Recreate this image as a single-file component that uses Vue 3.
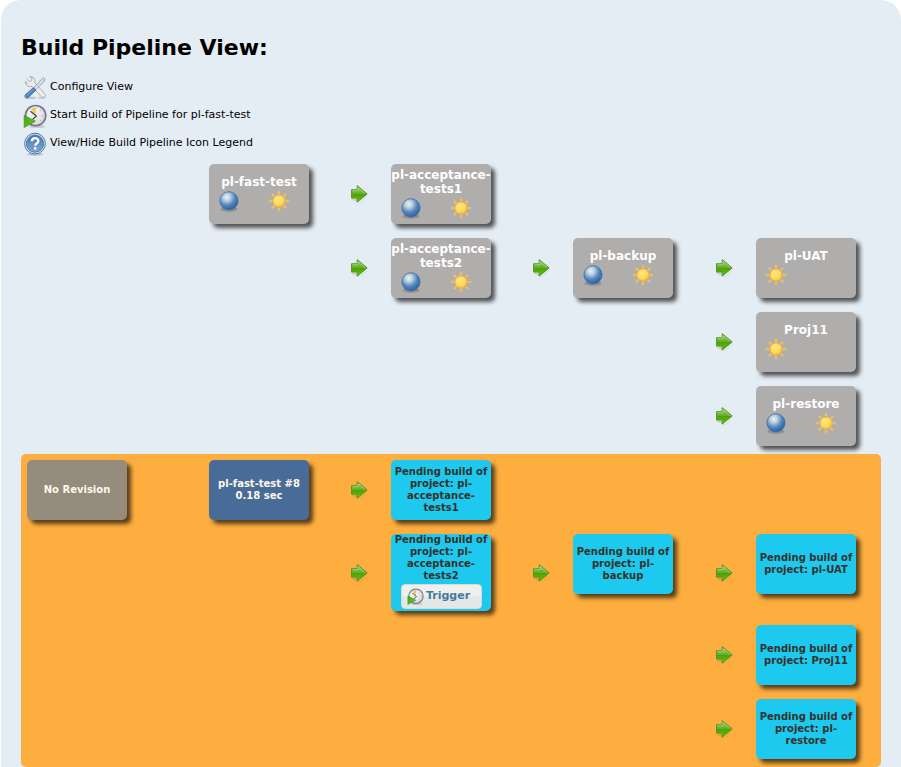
<script setup>
const projects = [
  { lines: ['pl-fast-test'], col: 2, row: 1, ball: true },
  { lines: ['pl-acceptance-', 'tests1'], col: 4, row: 1, ball: true },
  { lines: ['pl-acceptance-', 'tests2'], col: 4, row: 2, ball: true },
  { lines: ['pl-backup'], col: 6, row: 2, ball: true },
  { lines: ['pl-UAT'], col: 8, row: 2 },
  { lines: ['Proj11'], col: 8, row: 3 },
  { lines: ['pl-restore'], col: 8, row: 4, ball: true },
]
const builds = [
  { lines: ['No Revision'], col: 1, row: 1, kind: 'revision' },
  { lines: ['pl-fast-test #8', '0.18 sec'], col: 2, row: 1, kind: 'success' },
  { lines: ['Pending build of', 'project: pl-', 'acceptance-', 'tests1'], col: 4, row: 1, kind: 'pending' },
  { lines: ['Pending build of', 'project: pl-', 'acceptance-', 'tests2'], col: 4, row: 2, kind: 'pending', trigger: true },
  { lines: ['Pending build of', 'project: pl-', 'backup'], col: 6, row: 2, kind: 'pending' },
  { lines: ['Pending build of', 'project: pl-UAT'], col: 8, row: 2, kind: 'pending' },
  { lines: ['Pending build of', 'project: Proj11'], col: 8, row: 3, kind: 'pending' },
  { lines: ['Pending build of', 'project: pl-', 'restore'], col: 8, row: 4, kind: 'pending' },
]
const arrows = [
  [3, 1], [3, 2], [5, 2], [7, 2], [7, 3], [7, 4],
]
const links = [
  { icon: 'tools', text: 'Configure View' },
  { icon: 'clock', text: 'Start Build of Pipeline for pl-fast-test' },
  { icon: 'help', text: 'View/Hide Build Pipeline Icon Legend' },
]
const rays = [0, 45, 90, 135, 180, 225, 270, 315]
const cell = (c, r) => `c${c} r${r}`
</script>

<template>
  <svg class="defs" width="0" height="0">
    <defs>
      <radialGradient id="gBall" cx="38%" cy="30%" r="72%">
        <stop offset="0" stop-color="#f2f4e4" />
        <stop offset=".28" stop-color="#b9cfe0" />
        <stop offset=".62" stop-color="#5586c0" />
        <stop offset="1" stop-color="#2c5f9e" />
      </radialGradient>
      <radialGradient id="gSun" cx="42%" cy="38%" r="62%">
        <stop offset="0" stop-color="#ffe886" />
        <stop offset=".7" stop-color="#ffd84f" />
        <stop offset="1" stop-color="#f6b73c" />
      </radialGradient>
      <linearGradient id="gArrow" x1="0" y1="0" x2="0" y2="1">
        <stop offset="0" stop-color="#a5cf72" />
        <stop offset=".48" stop-color="#64ad2a" />
        <stop offset=".52" stop-color="#4ca202" />
        <stop offset="1" stop-color="#6cc410" />
      </linearGradient>
      <linearGradient id="gPlay" x1="0" y1="0" x2="1" y2="1">
        <stop offset="0" stop-color="#47a51d" />
        <stop offset="1" stop-color="#62c91c" />
      </linearGradient>
      <linearGradient id="gFace" x1="0" y1="0" x2="1" y2="1">
        <stop offset="0" stop-color="#ffffff" />
        <stop offset="1" stop-color="#d6d6d0" />
      </linearGradient>
      <linearGradient id="gHelp" x1="0" y1="0" x2="0" y2="1">
        <stop offset="0" stop-color="#4675b1" />
        <stop offset="1" stop-color="#82a7d2" />
      </linearGradient>
      <symbol id="ball" viewBox="0 0 24 24">
        <ellipse cx="12" cy="20.3" rx="8.5" ry="2.4" fill="#444" opacity=".3" />
        <circle cx="12" cy="11.8" r="9.1" fill="url(#gBall)" stroke="#3c6ca8" stroke-width=".8" />
      </symbol>
      <symbol id="sun" viewBox="0 0 24 24">
        <path v-for="a in rays" :key="a" d="M10.9 5 11.5 1.8h1L13.1 5z" :transform="`rotate(${a} 12 12)`" fill="#f4c565" stroke="#efb85d" stroke-width=".5" />
        <circle cx="12" cy="12" r="6.1" fill="url(#gSun)" stroke="#f1b344" stroke-width=".8" />
      </symbol>
      <symbol id="arrow" viewBox="0 0 20 20">
        <path d="M2 14.5 8 15v4l3-1 7-7-5 6-3 2-8-3z" fill="#555" opacity=".2" />
        <path d="M1.5 5.7h5.7V1.6L17.2 9.9 7.2 18.2v-4.1H1.5z" fill="url(#gArrow)" stroke="#4c9424" stroke-width=".9" />
        <path d="M2.6 6.7h5.5V3.8l7.4 6.1" fill="none" stroke="#c5e3a2" stroke-width=".7" opacity=".7" />
      </symbol>
      <symbol id="clock" viewBox="0 0 24 24">
        <ellipse cx="14" cy="22.4" rx="8" ry="1.4" fill="#555" opacity=".25" />
        <circle cx="12.6" cy="11.6" r="10.1" fill="url(#gFace)" stroke="#77728c" stroke-width="1.7" />
        <circle cx="12.6" cy="11.6" r="8.8" fill="none" stroke="#c7c5ce" stroke-width=".8" />
        <path d="M12.6 11.6 8 5.2a7.6 7.6 0 0 1 4.6-1.7z" fill="#efc958" />
        <path d="M7.4 7.2 13.4 12l-4 3.6" fill="none" stroke="#383838" stroke-width="1.1" />
        <path d="M12.6 3.6v1.6M20.5 11.6H19M18.2 6 17 7.1M18.2 17.2 17 16" stroke="#aaa" stroke-width=".8" />
        <path d="M1.2 11.4 12.4 17.2 1.2 23.4z" fill="url(#gPlay)" stroke="#419516" stroke-width=".8" />
      </symbol>
      <symbol id="help" viewBox="0 0 24 24">
        <ellipse cx="12" cy="22.3" rx="8" ry="1.4" fill="#555" opacity=".3" />
        <circle cx="12" cy="11.6" r="10.4" fill="#e9f0f8" stroke="#4774ad" stroke-width="1" />
        <circle cx="12" cy="11.6" r="8.7" fill="url(#gHelp)" stroke="#3f6da8" stroke-width=".8" />
        <path d="M8.9 9.3c0-4.2 6.5-4.1 6.5-.4 0 2.5-3.1 2.5-3.1 4.9" fill="none" stroke="#fff" stroke-width="2.3" />
        <rect x="11" y="15.2" width="2.5" height="2.4" fill="#fff" />
      </symbol>
      <symbol id="tools" viewBox="0 0 24 24">
        <ellipse cx="7" cy="21.8" rx="6.5" ry="1.3" fill="#555" opacity=".25" />
        <ellipse cx="19" cy="21.8" rx="4" ry="1.1" fill="#555" opacity=".2" />
        <path d="M3.3 2.6 6.4 5.6 8.7 4.7 9 2 6.8.8c3.2-.6 6.3 2.1 5 6L21.6 17.6c2.1 2.5-1 5.3-3.3 3.1L9 10.3C5.400 11.700 1.700 8.600 2.300 5.600l3 2.600" fill="#eceeed" stroke="#9c9f9e" stroke-width=".8" />
        <path d="M20.700 1.700 22.200 3.200 20.600 6.200 12.600 13.800 10.700 12 18.100 3.700z" fill="#d4dde4" stroke="#889cac" stroke-width=".8" />
        <path d="M10.300 11.700 12.800 14.100 5.300 21.400c-2 1.400-4.200-.9-2.900-2.700z" fill="#4f80bb" stroke="#31639f" stroke-width=".8" />
        <path d="M10.300 13.100 3.900 19.500" stroke="#9abbe0" stroke-width=".9" />
      </symbol>
    </defs>
  </svg>

  <main class="page">
    <h1>Build Pipeline View:</h1>
    <nav>
      <a v-for="l in links" :key="l.icon">
        <svg class="link-icon"><use :href="'#' + l.icon" /></svg>
        <span :class="l.icon + '-label'">{{ l.text }}</span>
      </a>
    </nav>

    <section class="pipeline heads">
      <div v-for="p in projects" :key="p.lines.join('')" class="card project" :class="cell(p.col, p.row)">
        <span v-for="t in p.lines" :key="t">{{ t }}</span>
        <div class="status">
          <svg v-if="p.ball"><use href="#ball" /></svg>
          <svg><use href="#sun" /></svg>
        </div>
      </div>
      <svg v-for="a in arrows" :key="a.join()" class="arrow" :class="cell(...a)"><use href="#arrow" /></svg>
    </section>

    <section class="pipeline builds">
      <div v-for="b in builds" :key="b.lines.join('')" class="card build" :class="[b.kind, cell(b.col, b.row), { tall: b.trigger }]">
        <span v-for="t in b.lines" :key="t">{{ t }}</span>
        <button v-if="b.trigger"><svg><use href="#clock" /></svg><span>Trigger</span></button>
      </div>
      <svg v-for="a in arrows" :key="a.join()" class="arrow" :class="cell(...a)"><use href="#arrow" /></svg>
    </section>
  </main>
</template>

<style>
body { background: #fff; overflow: hidden; }
</style>
<style scoped>
.defs { position: absolute; }
.page {
  box-sizing: border-box;
  width: 900px;
  height: 787px;
  margin-left: 1px;
  padding: 34px 20px 20px;
  border-radius: 20px;
  background: #e5edf4;
  color: #000;
  font-family: Verdana, "DejaVu Sans", sans-serif;
}
h1 { margin: 0; font-size: 22px; line-height: 28px; height: 40px; white-space: nowrap; }
nav { height: 90px; }
nav a { display: flex; height: 28px; font-size: 11px; line-height: 26px; white-space: nowrap; }
.link-icon { width: 24px; height: 24px; margin: 2px 3px 0 2px; }
.pipeline {
  display: grid;
  grid-template-columns: 182px 141px 41px 141px 41px 142px 41px 100px;
  row-gap: 14px;
  padding: 0 6px;
}
.heads { grid-template-rows: repeat(4, 60px); height: 290px; align-content: start; }
.builds {
  grid-template-rows: 60px 77px 60px 60px;
  padding: 6px 6px 8px;
  border-radius: 5px;
  background: #fdae3f;
}
.card {
  display: flex;
  flex-direction: column;
  align-items: center;
  justify-content: center;
  box-sizing: border-box;
  width: 100px;
  height: 60px;
  border-radius: 5px;
  box-shadow: 4px 4px 4px rgba(0, 0, 0, .65);
  font-weight: bold;
  white-space: nowrap;
}
.card.tall { height: 77px; justify-content: flex-start; }
.project { background: #b0adad; color: #fff; font-size: 12px; line-height: 14px; }
.status { display: flex; gap: 26px; align-self: stretch; padding-left: 8px; height: 24px; }
.status svg { width: 24px; height: 24px; }
.build { font-size: 10px; line-height: 12px; }
.revision { background: #958c7d; color: #fff8ee; }
.success { background: #486b98; color: #fff8ee; }
.pending { background: #1dc9ee; color: #35322b; }
.arrow { width: 20px; height: 20px; align-self: center; }
button {
  display: flex;
  align-items: center;
  box-sizing: border-box;
  width: 81px;
  height: 25px;
  margin: 2px 0 0 1px;
  padding: 0 0 1px 5px;
  gap: 2px;
  border: 1px solid #d8dad6;
  border-radius: 4px;
  background: linear-gradient(#efefec 48%, #e3e7e5 52%);
  color: #457a9f;
  font: bold 11px/14px Verdana, "DejaVu Sans", sans-serif;
}
button svg { width: 17px; height: 17px; }
.c1 { grid-column: 1; } .c2 { grid-column: 2; } .c3 { grid-column: 3; } .c4 { grid-column: 4; }
.c5 { grid-column: 5; } .c6 { grid-column: 6; } .c7 { grid-column: 7; } .c8 { grid-column: 8; }
.r1 { grid-row: 1; } .r2 { grid-row: 2; } .r3 { grid-row: 3; } .r4 { grid-row: 4; }
</style>
